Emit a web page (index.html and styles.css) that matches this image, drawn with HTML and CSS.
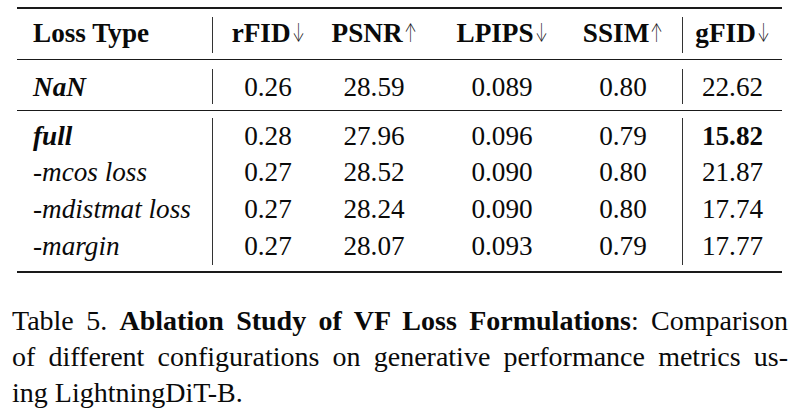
FILE: index.html
```html
<!DOCTYPE html>
<html>
<head>
<meta charset="utf-8">
<link rel="stylesheet" href="styles.css">
</head>
<body>
<main class="page">
  <section class="tbl">
    <div class="sec head">
      <div class="col label">Loss Type</div>
      <div class="sep"></div>
      <div class="col c1">rFID<span class="ar">↓</span></div>
      <div class="col c2">PSNR<span class="ar">↑</span></div>
      <div class="col c3">LPIPS<span class="ar">↓</span></div>
      <div class="col c4">SSIM<span class="ar">↑</span></div>
      <div class="sep"></div>
      <div class="col c5">gFID<span class="ar">↓</span></div>
    </div>
    <div class="sec nan">
      <div class="col label"><span class="bi">NaN</span></div>
      <div class="sep"></div>
      <div class="col c1">0.26</div>
      <div class="col c2">28.59</div>
      <div class="col c3">0.089</div>
      <div class="col c4">0.80</div>
      <div class="sep"></div>
      <div class="col c5">22.62</div>
    </div>
    <div class="sec grp">
      <div class="col label">
        <div class="bi">full</div>
        <div class="it">-mcos loss</div>
        <div class="it">-mdistmat loss</div>
        <div class="it">-margin</div>
      </div>
      <div class="sep"></div>
      <div class="col c1"><div>0.28</div><div>0.27</div><div>0.27</div><div>0.27</div></div>
      <div class="col c2"><div>27.96</div><div>28.52</div><div>28.24</div><div>28.07</div></div>
      <div class="col c3"><div>0.096</div><div>0.090</div><div>0.090</div><div>0.093</div></div>
      <div class="col c4"><div>0.79</div><div>0.80</div><div>0.80</div><div>0.79</div></div>
      <div class="sep"></div>
      <div class="col c5"><div class="b">15.82</div><div>21.87</div><div>17.74</div><div>17.77</div></div>
    </div>
  </section>
  <p class="caption">
    <span class="line just">Table 5. <b>Ablation Study of VF Loss Formulations</b>: Comparison</span>
    <span class="line just">of different configurations on generative performance metrics us-</span>
    <span class="line">ing LightningDiT-B.</span>
  </p>
</main>
</body>
</html>
```

FILE: styles.css
```css
body {
  margin: 0;
  background: #fff;
  font-family: "Liberation Serif", serif;
}
.page {
  display: block;
  width: 800px;
  color: #0a0a0a;
  font-family: "Liberation Serif", serif;
}
.tbl {
  display: block;
  margin: 7px 0 0 17px;
  width: 765px;
  border-top: 2px solid #1a1a1a;
  border-bottom: 2px solid #1a1a1a;
  font-size: 27.2px;
}
.sec {
  display: flex;
}
.col {
  box-sizing: border-box;
  text-align: center;
  font-family: "Liberation Serif", serif;
}
.label {
  width: 195px;
  text-align: left;
}
.c1 { width: 110px; }
.c2 { width: 102px; }
.c3 { width: 154px; }
.c4 { width: 103px; }
.c5 { width: 99px; }
.ar {
  display: inline-block;
  font-family: Inter, "DejaVu Sans", sans-serif;
  font-weight: 200;
  font-size: 25px;
  transform: scaleX(0.6);
  margin: 0 -4px 0 -3px;
}
.sep {
  width: 1px;
  background: #333;
}
.head {
  font-weight: bold;
  line-height: 37px;
  border-bottom: 1px solid #1a1a1a;
}
.head .col { padding: 6px 0 7px; }
.head .sep { margin: 8px 0 6px; }
.nan {
  line-height: 37px;
  border-bottom: 1px solid #1a1a1a;
}
.nan .col { padding: 9px 0 4px; }
.nan .sep { margin: 9px 0 6px; }
.grp {
  line-height: 36.7px;
}
.grp .col { padding: 6.5px 0 6.7px; }
.grp .sep { margin: 7px 0 6px; }
.sec .label { padding-left: 16px; }
.sec .c4 { padding-right: 15px; }
.bi {
  font-weight: bold;
  font-style: italic;
}
.it {
  font-style: italic;
}
.b {
  font-weight: bold;
}
.caption {
  font-family: "Liberation Serif", serif;
  margin: 29.5px 0 0 12px;
  width: 776px;
  font-size: 28px;
  line-height: 36px;
}
.line {
  display: block;
  white-space: nowrap;
}
.line.just {
  text-align: justify;
  text-align-last: justify;
  white-space: normal;
}
```
